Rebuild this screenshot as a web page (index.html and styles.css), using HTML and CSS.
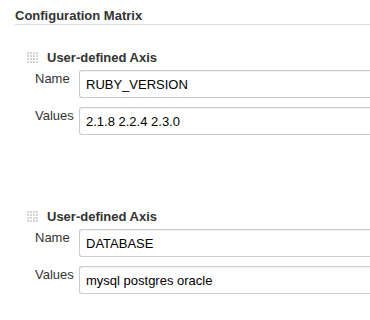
FILE: index.html
```html
<!DOCTYPE html>
<html>
<head>
    <meta charset="utf-8">
    <title>Configuration Matrix</title>
    <link rel="stylesheet" href="styles.css">
</head>
<body>
    <div class="section">
        <div class="section-header">Configuration Matrix</div>

        <div class="axis">
            <div class="axis-head">
                <svg class="grip" width="12" height="12" viewBox="0 0 12 12">
                    <defs>
                        <pattern id="dots" width="3" height="3" patternUnits="userSpaceOnUse">
                            <rect x="0" y="0" width="2" height="2" fill="#d4d4d4"/>
                        </pattern>
                    </defs>
                    <rect width="12" height="12" fill="url(#dots)"/>
                </svg>
                <span class="axis-title">User-defined Axis</span>
            </div>
            <div class="row">
                <label class="label">Name</label>
                <input class="field" type="text" value="RUBY_VERSION">
            </div>
            <div class="row">
                <label class="label">Values</label>
                <input class="field" type="text" value="2.1.8 2.2.4 2.3.0">
            </div>
        </div>

        <div class="axis axis-next">
            <div class="axis-head">
                <svg class="grip" width="12" height="12" viewBox="0 0 12 12">
                    <rect width="12" height="12" fill="url(#dots)"/>
                </svg>
                <span class="axis-title">User-defined Axis</span>
            </div>
            <div class="row">
                <label class="label">Name</label>
                <input class="field" type="text" value="DATABASE">
            </div>
            <div class="row">
                <label class="label">Values</label>
                <input class="field" type="text" value="mysql postgres oracle">
            </div>
        </div>
    </div>
</body>
</html>
```

FILE: styles.css
```css
html,
body {
    margin: 0;
    height: 100%;
    overflow: hidden;
    background: #fff;
}
body {
    font-family: "Liberation Sans", Arial, sans-serif;
    font-size: 13px;
    color: #333;
}
.section {
    padding-left: 15px;
}
.section-header {
    font-weight: bold;
    font-size: 13px;
    line-height: 15px;
    padding-top: 8px;
    padding-bottom: 1px;
    border-bottom: 1px solid #ddd;
}
.axis {
    margin-top: 27px;
    display: flex;
    flex-direction: column;
}
.axis-next {
    margin-top: 76px;
}
.axis-head {
    display: flex;
    align-items: center;
    gap: 8px;
    padding-left: 12px;
    height: 12px;
    margin-bottom: 6px;
}
.grip {
    display: block;
    flex: none;
}
.axis-title {
    font-weight: bold;
    font-size: 13px;
    color: #333;
    line-height: 14px;
}
.row {
    display: flex;
    align-items: flex-start;
}
.row + .row {
    margin-top: 9px;
}
.label {
    width: 44px;
    padding-left: 20px;
    padding-top: 1px;
    flex: none;
    color: #333;
    line-height: 15px;
}
.field {
    box-sizing: border-box;
    flex: 1;
    min-width: 0;
    height: 28px;
    margin: 0;
    padding: 0 6px;
    border: 1px solid #ccc;
    border-right: 0;
    border-radius: 3px 0 0 3px;
    box-shadow: inset 0 1px 1px rgba(0, 0, 0, 0.06);
    font-family: "Liberation Sans", Arial, sans-serif;
    font-size: 13px;
    color: #000;
    background: #fff;
}
```
